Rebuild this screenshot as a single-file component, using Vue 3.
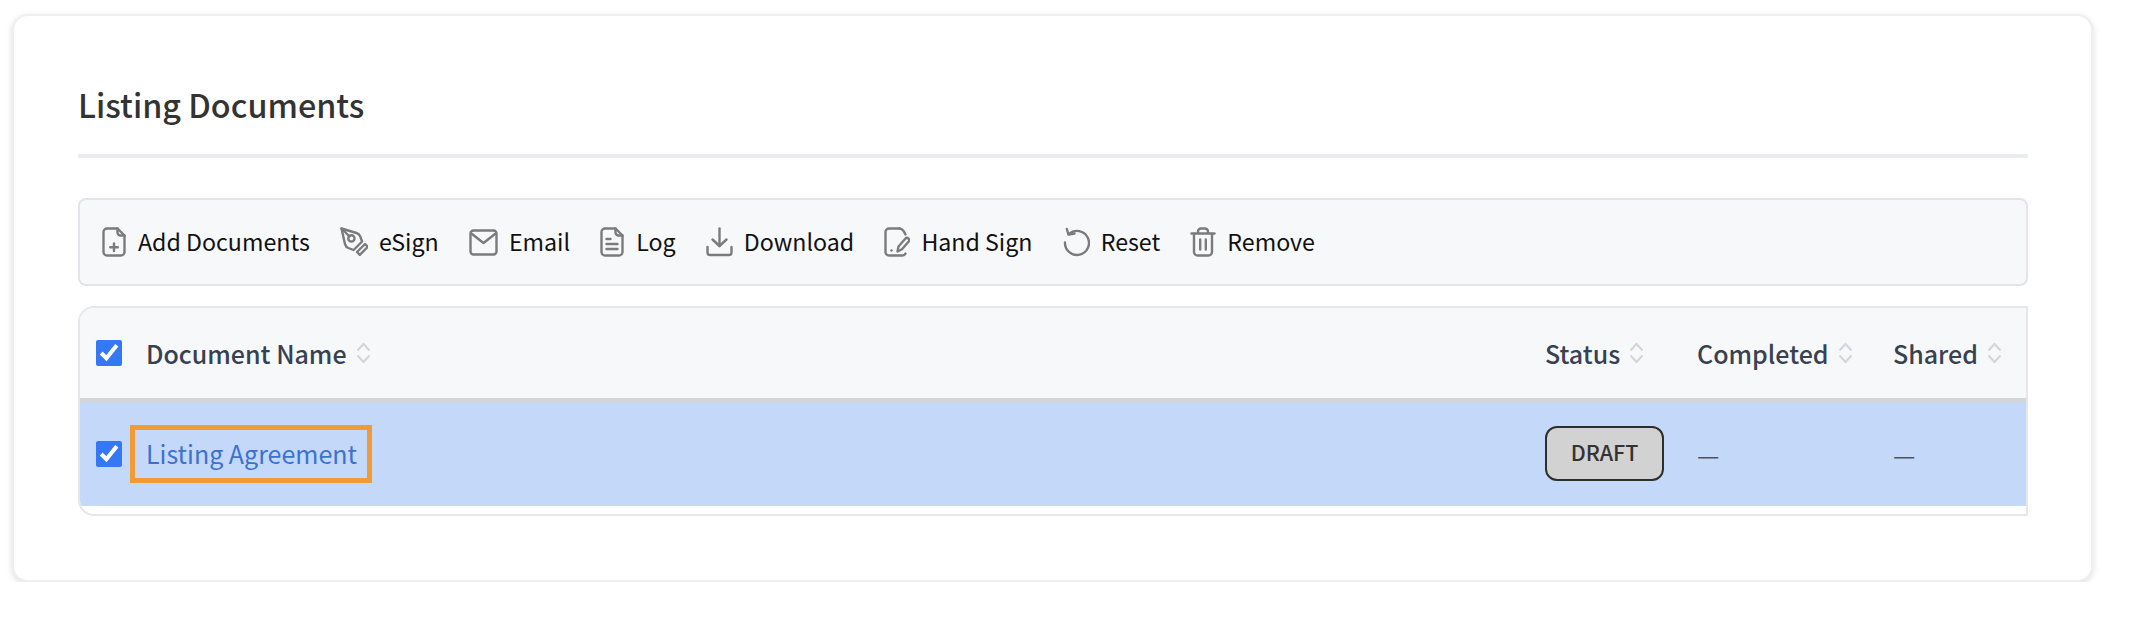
<template>
  <div class="page">
    <section class="card">
      <h2 class="title">Listing Documents</h2>
      <div class="toolbar">
        <button v-for="a in actions" :key="a.label" class="action">
          <svg :width="a.w" height="30" :viewBox="`0 0 ${a.w} 30`" fill="none" stroke="#7b7b7b" stroke-width="2.4" stroke-linecap="round" stroke-linejoin="round">
            <path v-for="(d, i) in a.paths" :key="i" :d="d" />
          </svg>
          <span class="action-label">{{ a.label }}</span>
        </button>
      </div>
      <div class="table-wrap">
        <table>
          <colgroup>
            <col style="width: 66px" />
            <col />
            <col style="width: 152px" />
            <col style="width: 196px" />
            <col style="width: 133px" />
          </colgroup>
          <thead>
            <tr>
              <th><input type="checkbox" class="check" checked /></th>
              <th v-for="h in headers" :key="h">
                <span class="th-in">{{ h }}
                  <svg width="15" height="22" viewBox="0 0 15 22" fill="none" stroke="#d3d5da" stroke-width="2.2" stroke-linejoin="round">
                    <path d="M1.5 8.5 7.5 2l6 6.5" />
                    <path d="M1.5 13.5l6 6.5 6-6.5" />
                  </svg>
                </span>
              </th>
            </tr>
          </thead>
          <tbody>
            <tr>
              <td><input type="checkbox" class="check" checked /></td>
              <td><a class="doc-link" href="#">Listing Agreement</a></td>
              <td><span class="badge">DRAFT</span></td>
              <td class="dash">—</td>
              <td class="dash">—</td>
            </tr>
          </tbody>
        </table>
      </div>
    </section>
  </div>
</template>

<script setup>
const headers = ['Document Name', 'Status', 'Completed', 'Shared']

const docOutline = 'M15.5 1.5H5A3.5 3.5 0 0 0 1.5 5v20A3.5 3.5 0 0 0 5 28.5h14a3.5 3.5 0 0 0 3.5-3.5V8.5z'
const docFold = 'M15.5 1.5v4a3 3 0 0 0 3 3h4'

const actions = [
  {
    label: 'Add Documents',
    w: 25,
    paths: [docOutline, docFold, 'M12 16.5v7.5M8.2 20.2h7.6'],
  },
  {
    label: 'eSign',
    w: 28,
    paths: [
      'M1.5 1.5 16.5 6c2 .6 3 1.5 3.6 3.2l2 5.3-8.5 8.5-5.3-2c-1.7-.6-2.6-1.6-3.2-3.6z',
      'M1.5 1.5 9.5 9.5',
      'M13.6 9.2a3.1 3.1 0 1 1-4.4 4.4 3.1 3.1 0 0 1 4.4-4.4z',
      'M17 25l8-8 2.8 2.8-8 8z',
    ],
  },
  {
    label: 'Email',
    w: 29,
    paths: [
      'M4.5 3.5h20a3 3 0 0 1 3 3v18a3 3 0 0 1-3 3h-20a3 3 0 0 1-3-3v-18a3 3 0 0 1 3-3z',
      'M3 7l11.5 9L26 7',
    ],
  },
  {
    label: 'Log',
    w: 25,
    paths: [docOutline, docFold, 'M6.5 12h4M6.5 17h11M6.5 22h11'],
  },
  {
    label: 'Download',
    w: 27,
    paths: [
      'M13.5 1.5v17.5',
      'M6.5 12.5l7 6.5 7-6.5',
      'M1.5 20v5.5a2.5 2.5 0 0 0 2.5 2.5h19a2.5 2.5 0 0 0 2.5-2.5V20',
    ],
  },
  {
    label: 'Hand Sign',
    w: 26,
    paths: [
      'M15.5 1.5H5A3.5 3.5 0 0 0 1.5 5v20A3.5 3.5 0 0 0 5 28.5h13.5a3.5 3.5 0 0 0 3-2',
      'M15.5 1.5c2.5 0 4.5 2.5 6 6',
      'M13.5 24.5l1-5 7-8a2.2 2.2 0 0 1 3.2 3l-7 8z',
      'M7.5 23.5h.1',
    ],
  },
  {
    label: 'Reset',
    w: 27,
    paths: ['M6 7A12 12 0 1 1 2 15.5', 'M3.8 2l1.7 5.6L11.5 6.5'],
  },
  {
    label: 'Remove',
    w: 26,
    paths: [
      'M1.5 6.5h23',
      'M8 6V4.5a3 3 0 0 1 3-3h4a3 3 0 0 1 3 3V6',
      'M4 7v18a3.5 3.5 0 0 0 3.5 3.5h11A3.5 3.5 0 0 0 22 25V7',
      'M10.2 12.5v10M15.8 12.5v10',
    ],
  },
]
</script>

<style>
body {
  background: #fff;
}
</style>

<style scoped>
.page {
  padding: 14px 37px 0 12px;
  font-family: "Noto Sans CJK SC", "Noto Sans", sans-serif;
}
.card {
  box-sizing: border-box;
  height: 568px;
  padding: 0 63px 0 64px;
  background: #fff;
  border: 2px solid #efefef;
  border-radius: 16px;
  box-shadow: 0 2px 6px rgba(0, 0, 0, 0.14);
}
.title {
  margin: 0;
  padding: 66px 0 28px;
  line-height: 44px;
  font-size: 32.3px;
  font-weight: 500;
  color: #333;
  border-bottom: 4px solid #ebecef;
}
.toolbar {
  display: flex;
  align-items: center;
  gap: 30.2px;
  box-sizing: border-box;
  height: 88px;
  margin-top: 40px;
  padding-left: 22px;
  background: #f7f8fa;
  border: 2px solid #e2e4e9;
  border-radius: 8px;
}
.action {
  display: flex;
  align-items: center;
  gap: 11px;
  padding: 0;
  border: none;
  background: none;
  font: inherit;
  font-size: 23.2px;
  line-height: 32px;
  color: #111;
}
.action-label {
  padding-bottom: 2px;
}
.table-wrap {
  margin-top: 20px;
  border: 2px solid #e6e7ea;
  border-radius: 16px 0 0 16px;
  overflow: hidden;
  padding-bottom: 8px;
}
table {
  width: 100%;
  border-collapse: separate;
  border-spacing: 0;
  table-layout: fixed;
}
thead tr {
  height: 94px;
  background: #f7f8fa;
}
tbody tr {
  height: 104px;
  background: #c4d9f9;
}
th,
td {
  padding: 0;
  text-align: left;
}
th {
  border-bottom: 4px solid #d4d5d7;
  font-size: 25px;
  font-weight: 500;
  color: #374151;
}
th:first-child,
td:first-child {
  padding-left: 16px;
}
.th-in {
  display: inline-flex;
  align-items: center;
  gap: 9px;
  padding-bottom: 2px;
  line-height: 32px;
}
.check {
  display: block;
  width: 26px;
  height: 26px;
  margin: 0;
  accent-color: #3478f6;
}
.doc-link {
  display: inline-block;
  margin-left: -16px;
  padding: 0 10px 2px 11px;
  line-height: 46px;
  border: 5px solid #f29a36;
  font-size: 25px;
  color: #3b72d1;
  text-decoration: none;
}
.badge {
  display: block;
  box-sizing: border-box;
  width: 119px;
  height: 55px;
  margin-bottom: 2px;
  padding-bottom: 3px;
  line-height: 48px;
  text-align: center;
  font-size: 21.5px;
  font-weight: 500;
  color: #333;
  background: #d2d2d2;
  border: 2px solid #2e2e2e;
  border-radius: 12px;
}
.dash {
  font-size: 25px;
  color: #4b5563;
}
</style>
